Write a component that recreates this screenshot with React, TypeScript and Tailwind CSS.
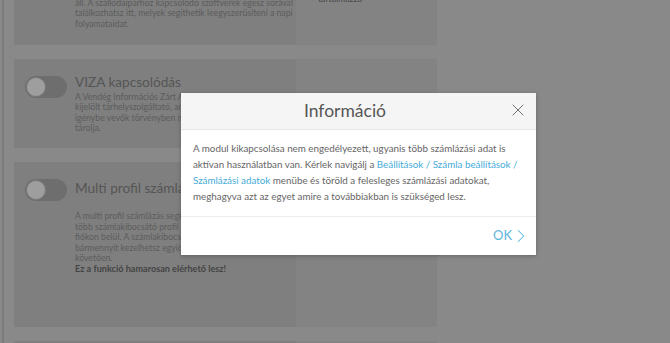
import { X, ChevronRight } from 'lucide-react';

const font = { fontFamily: 'Lato, "Open Sans", sans-serif' };

function Toggle() {
  return (
    <div className="flex h-[22px] w-[42px] shrink-0 items-center rounded-full bg-[#6e6e6e] p-[1px]">
      <div className="h-[20px] w-[20px] rounded-full border border-[#7a7a7a] bg-[#9e9e9e]" />
    </div>
  );
}

export default function App() {
  return (
    <div className="relative h-[343px] w-[670px] overflow-hidden bg-[#898989]" style={font}>
      <div className="absolute left-[2px] top-0 h-full w-[2px] bg-[#7b7b7b]" />

      <div className="flex flex-col gap-[14px] pl-[14px]">
        <div className="flex h-[45px]">
          <div className="w-[282px] overflow-hidden whitespace-nowrap bg-[#7f7f7f] pl-[61px] text-[8.7px] leading-[10.4px] text-[#5c5c5c]">
            <p className="mt-[-2px]">
              áll. A szállodaiparhoz kapcsolódó szoftverek egész sorával
              <br />
              találkozhatsz itt, melyek segíthetik leegyszerűsíteni a napi
              <br />
              folyamataidat.
            </p>
          </div>
          <div className="w-[141px] bg-[#838383] pl-[22px] text-[8.7px] leading-[10.4px] text-[#4a4a4a]">
            <p className="mt-[-6px]">tartalmazza</p>
          </div>
        </div>

        <div className="flex h-[89px]">
          <div className="flex w-[282px] gap-[8px] overflow-hidden whitespace-nowrap bg-[#7f7f7f] pl-[11px] pt-[17px]">
            <Toggle />
            <div className="mt-[-3px]">
              <h3 className="text-[13.6px] leading-[19px] text-[#555]">VIZA kapcsolódás</h3>
              <p className="text-[8.7px] leading-[10.4px] text-[#5c5c5c]">
                A Vendég Információs Zárt Adatbázis üzemeltetője
                <br />
                kijelölt tárhelyszolgáltató, amely a szálláshely-
                <br />
                igénybe vevők törvényben meghatározott adatait
                <br />
                tárolja.
              </p>
            </div>
          </div>
          <div className="w-[141px] bg-[#838383]" />
        </div>

        <div className="flex h-[165px]">
          <div className="flex w-[282px] gap-[8px] overflow-hidden whitespace-nowrap bg-[#7f7f7f] pl-[11px] pt-[17px]">
            <Toggle />
            <div className="mt-[-1px]">
              <h3 className="text-[13.6px] leading-[20px] text-[#555]">Multi profil számlázás</h3>
              <p className="mt-[13px] text-[8.7px] leading-[10.6px] text-[#5c5c5c]">
                A multi profil számlázás segítségével egyszerre
                <br />
                több számlakibocsátó profil hozható létre egy
                <br />
                fiókon belül. A számlakibocsátó profilok közül
                <br />
                bármennyit kezelhetsz egyidejűleg a beállítást
                <br />
                követően.
              </p>
              <p className="text-[9.1px] font-bold leading-[10.6px] text-[#444]">
                Ez a funkció hamarosan elérhető lesz!
              </p>
            </div>
          </div>
          <div className="w-[141px] bg-[#838383]" />
        </div>

        <div className="flex h-[40px]">
          <div className="w-[282px] bg-[#7f7f7f]" />
          <div className="w-[141px] bg-[#838383]" />
        </div>
      </div>

      <div className="absolute left-[181px] top-[93px] w-[355px] bg-white shadow-[0_1px_4px_rgba(0,0,0,0.25)]">
        <div className="relative flex h-[37px] items-center justify-center border-b border-[#e6e6e6] bg-[#f5f5f5] pr-[27px]">
          <h2 className="text-[17.5px] text-[#555]">Információ</h2>
          <X className="absolute right-[8px] top-[7px] h-[20px] w-[20px] text-[#666]" strokeWidth={1.1} />
        </div>
        <div className="border-b border-[#ececec] px-[12px] pb-[12px] pt-[10px] text-[9.8px] leading-[16px] text-[#666]">
          A modul kikapcsolása nem engedélyezett, ugyanis több számlázási adat is
          aktívan használatban van. Kérlek navigálj a{' '}
          <a className="text-[#45acd9]">Beállítások / Számla beállítások / Számlázási adatok</a>{' '}
          menübe és töröld a felesleges számlázási adatokat, meghagyva azt az egyet amire a
          továbbiakban is szükséged lesz.
        </div>
        <div className="flex h-[38px] items-center justify-end pr-[4px]">
          <span className="flex items-center text-[13px] text-[#5bb5dc]">
            OK
            <ChevronRight className="ml-[-2px] h-[22px] w-[22px]" strokeWidth={1.1} />
          </span>
        </div>
      </div>
    </div>
  );
}
